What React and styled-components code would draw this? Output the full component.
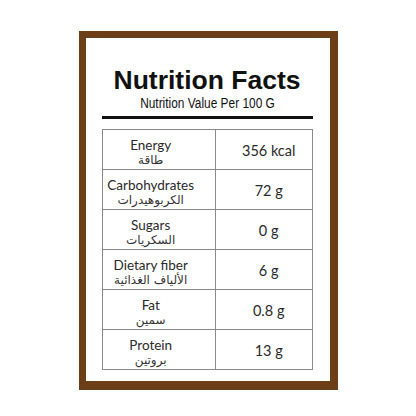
import React from "react";
import styled, { createGlobalStyle } from "styled-components";

const GlobalStyle = createGlobalStyle`
    html, body {
        margin: 0;
        padding: 0;
        background: #fff;
    }
`;

const Page = styled.div`
    width: 416px;
    height: 416px;
    display: flex;
    justify-content: center;
    align-items: flex-start;
    padding-top: 31px;
    box-sizing: border-box;
`;

const Frame = styled.div`
    width: 259px;
    height: 359px;
    box-sizing: border-box;
    border: 7px solid #6d3f18;
    border-right-width: 8px;
    border-bottom-width: 9px;
    background: #fff;
    padding: 27px 17px 0 16px;
    display: flex;
    flex-direction: column;
    align-items: stretch;
`;

const Title = styled.h1`
    margin: 0;
    font-family: "Liberation Sans", Arial, sans-serif;
    font-weight: bold;
    font-size: 26.5px;
    line-height: 30px;
    text-align: center;
    color: #111;
`;

const Subtitle = styled.div`
    font-family: "Liberation Sans", Arial, sans-serif;
    font-size: 14px;
    line-height: 16px;
    text-align: center;
    color: #111;
    transform: scaleX(0.85);
`;

const Rule = styled.hr`
    margin: 5px 0 10px;
    border: none;
    height: 3px;
    background: #111;
`;

const Table = styled.table`
    width: 100%;
    border-collapse: collapse;
    font-family: Lato, "Open Sans", "DejaVu Sans", sans-serif;
    color: #2a2a2a;
`;

const Tr = styled.tr`
    height: 40px;
`;

const Td = styled.td`
    border: 1px solid #8a8a8a;
    padding: ${(props) => (props.value ? "0 0 0 10px" : "5px 16px 0 0")};
    width: ${(props) => (props.value ? "46%" : "54%")};
    text-align: center;
    vertical-align: middle;
`;

const Name = styled.div`
    font-size: 13.5px;
    line-height: 16.5px;
`;

const Arabic = styled.div`
    font-family: "DejaVu Sans", sans-serif;
    font-size: 12px;
    line-height: 14px;
    color: #333;
    direction: rtl;
`;

const Value = styled.span`
    font-size: 14.5px;
`;

const rows = [
    { en: "Energy", ar: "طاقة", value: "356 kcal" },
    { en: "Carbohydrates", ar: "الكربوهيدرات", value: "72 g" },
    { en: "Sugars", ar: "السكريات", value: "0 g" },
    { en: "Dietary fiber", ar: "الألياف الغذائية", value: "6 g" },
    { en: "Fat", ar: "سمين", value: "0.8 g" },
    { en: "Protein", ar: "بروتين", value: "13 g" },
];

const App = () => {
    return (
        <>
            <GlobalStyle />
            <Page>
                <Frame>
                    <Title>Nutrition Facts</Title>
                    <Subtitle>Nutrition Value Per 100 G</Subtitle>
                    <Rule />
                    <Table>
                        <tbody>
                            {rows.map((row, i) => (
                                <Tr key={i}>
                                    <Td>
                                        <Name>{row.en}</Name>
                                        <Arabic>{row.ar}</Arabic>
                                    </Td>
                                    <Td value="1">
                                        <Value>{row.value}</Value>
                                    </Td>
                                </Tr>
                            ))}
                        </tbody>
                    </Table>
                </Frame>
            </Page>
        </>
    );
};

export default App;
